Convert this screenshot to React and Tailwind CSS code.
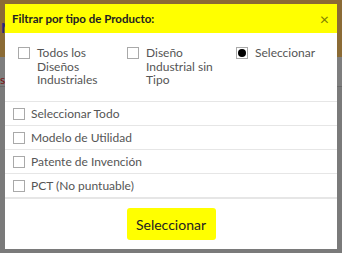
import React from 'react';

const topOptions = [
    { label: 'Todos los Diseños Industriales', type: 'check' },
    { label: 'Diseño Industrial sin Tipo', type: 'check' },
    { label: 'Seleccionar', type: 'radio' },
];

const rows = ['Seleccionar Todo', 'Modelo de Utilidad', 'Patente de Invención', 'PCT (No puntuable)'];

const Box = ({ radio }) => (
    <span className="flex h-[12px] w-[12px] shrink-0 items-center justify-center border border-[#a9a9a9] bg-white">
        {radio && <span className="h-[8px] w-[8px] rounded-full bg-black" />}
    </span>
);

const App = () => {
    return (
        <div className="relative h-[253px] w-[342px] overflow-hidden bg-[#7a7a7a] font-['Lato',sans-serif]">
            {/* dimmed page behind the modal */}
            <div className="h-[57px] bg-[#8b6b35] pl-[1px] pt-[17px] text-[14px] font-bold text-[#27277a]">M</div>
            <div className="h-[30px] border-b border-[#6a6a6a] bg-[#7e7e7e] pt-[14px] text-[12px] text-[#7a1010]">st</div>

            <div className="absolute left-[5px] top-[4px] flex h-[245px] w-[332px] flex-col overflow-hidden bg-white">
                <div className="flex h-[29px] items-center justify-between bg-[#ffff00] pl-[7px] pr-[8px]">
                    <h2 className="text-[11.5px] font-bold text-[#222]">Filtrar por tipo de Producto:</h2>
                    <span className="text-[16px] leading-none text-[#808000]">×</span>
                </div>

                <div className="flex h-[68px] pl-[13px] pt-[14px]">
                    {topOptions.map((o) => (
                        <div key={o.label} className="flex w-[109px] shrink-0 gap-[7px]">
                            <Box radio={o.type === 'radio'} />
                            <p className="-mt-[1px] w-[80px] text-[12px] leading-[13.5px] text-[#555]">{o.label}</p>
                        </div>
                    ))}
                </div>

                <div className="border-t border-[#e6e6e6]">
                    {rows.map((r) => (
                        <div key={r} className="flex h-[24px] items-center gap-[6px] border-b border-[#e6e6e6] pl-[8px]">
                            <Box />
                            <span className="text-[12px] text-[#555]">{r}</span>
                        </div>
                    ))}
                </div>

                <div className="flex flex-1 items-start justify-center border-t border-[#e6e6e6] pt-[9px]">
                    <button className="h-[32px] w-[89px] rounded-[3px] bg-[#ffff00] text-[14px] text-[#222]">
                        Seleccionar
                    </button>
                </div>
            </div>
        </div>
    );
};

export default App;
